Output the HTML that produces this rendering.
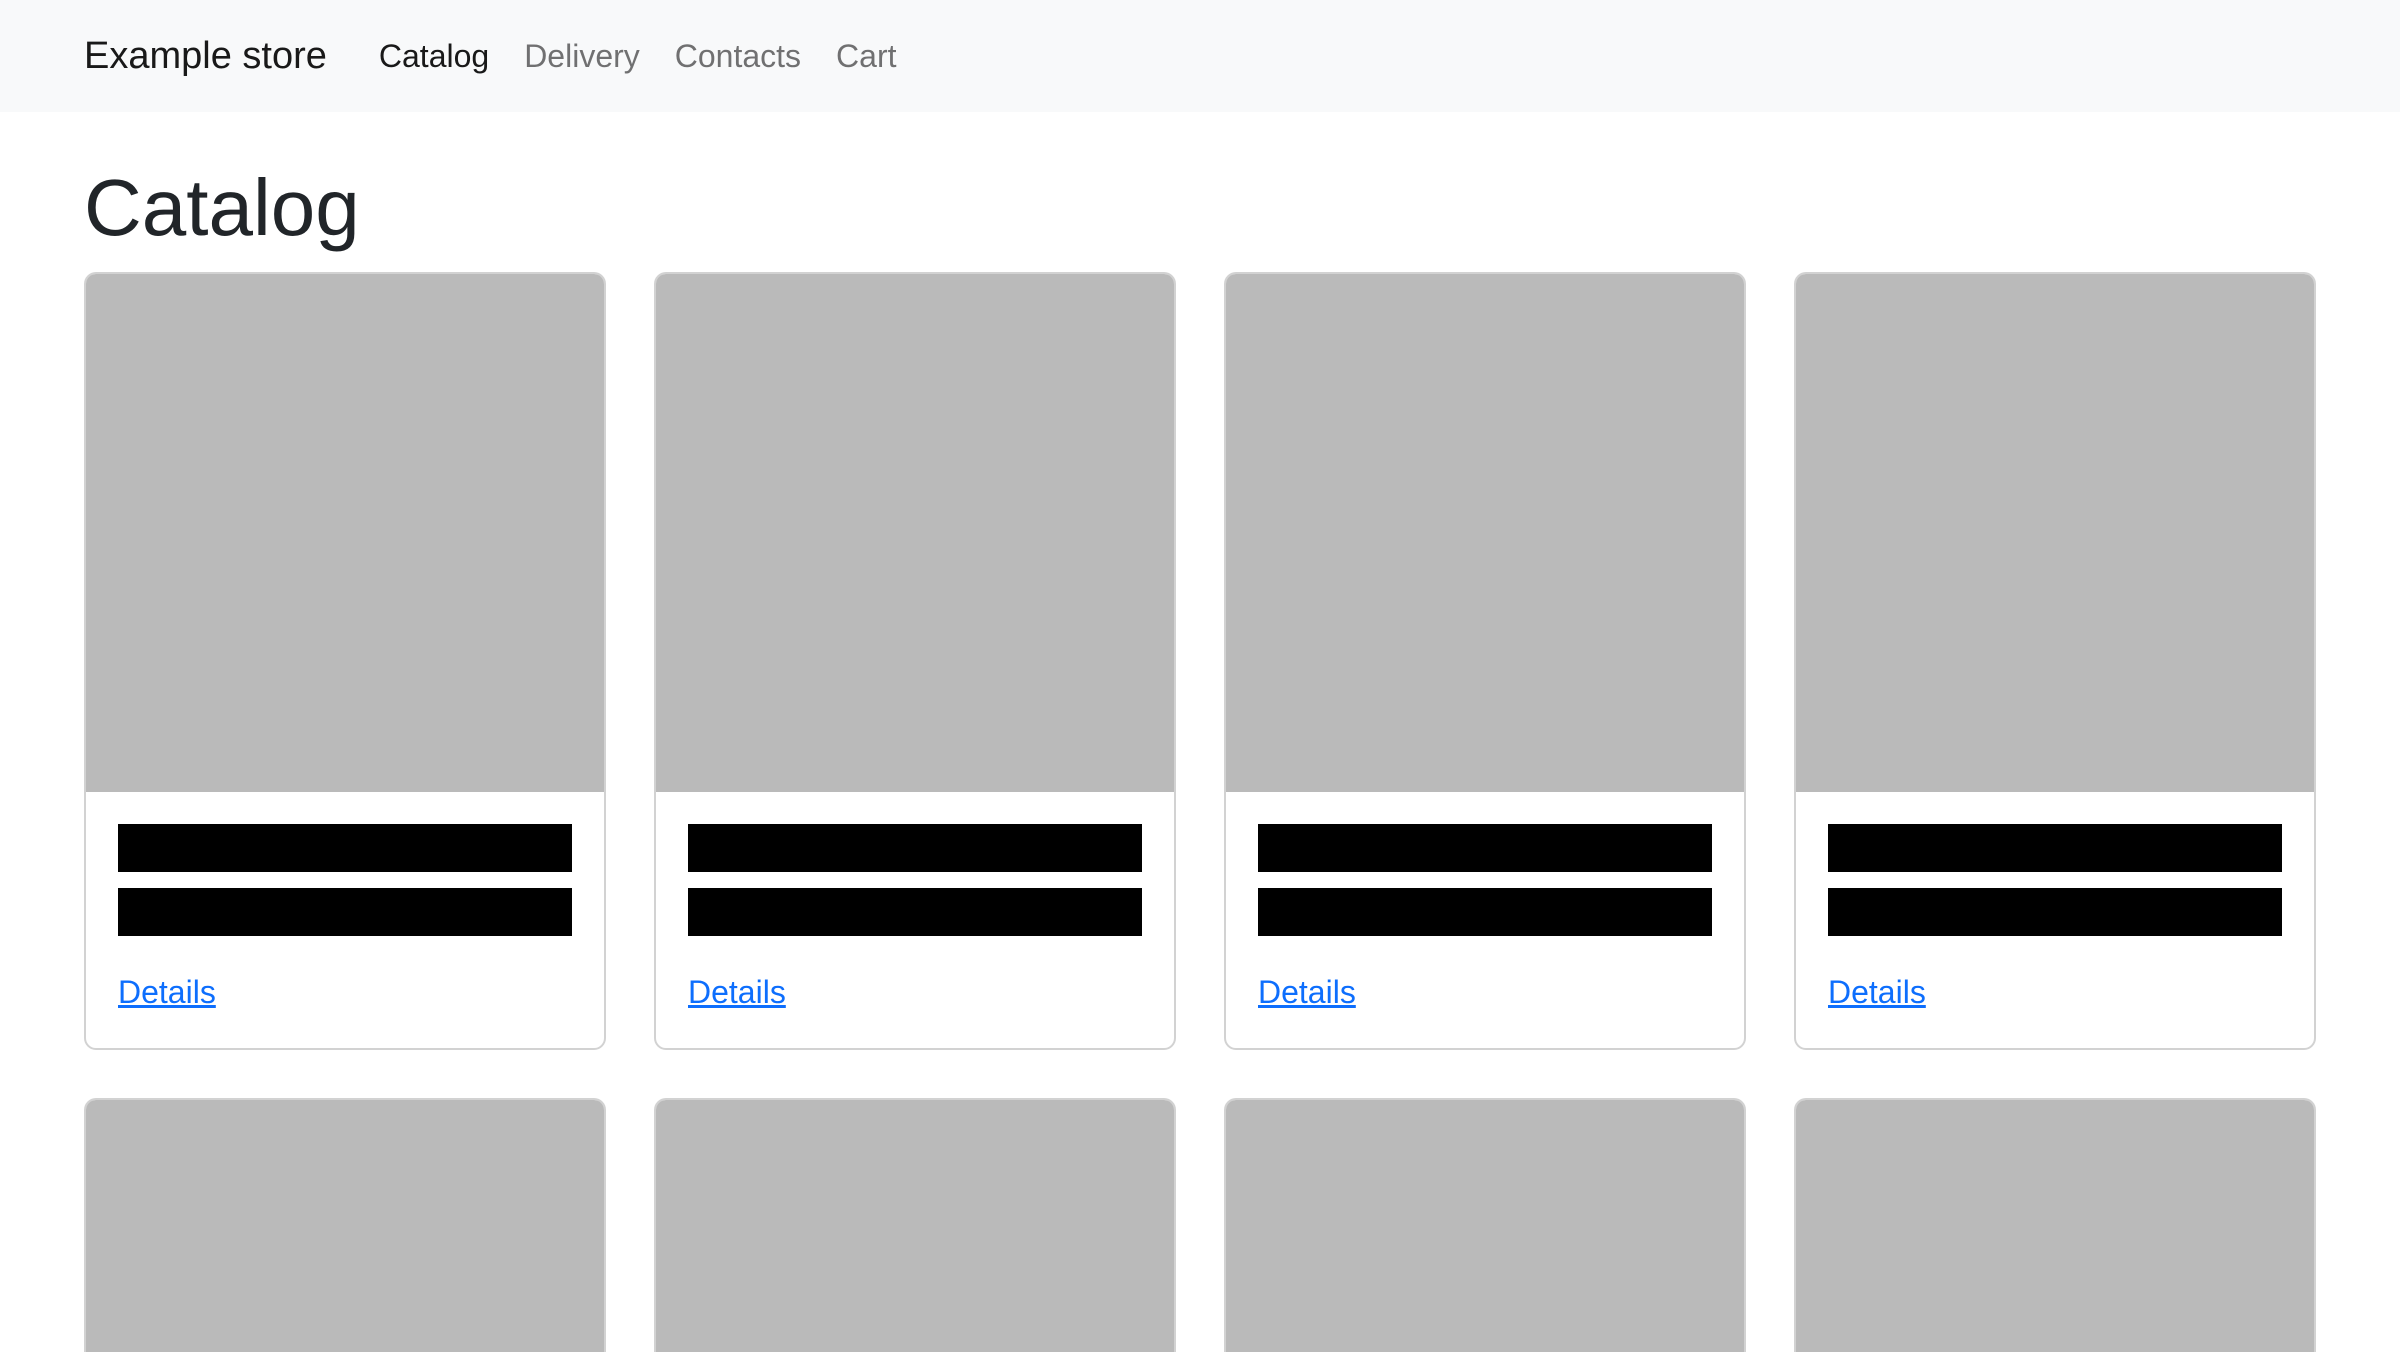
<!DOCTYPE html>
<html style="height:1352px;overflow:hidden;"><head><meta charset="utf-8"><style>
html,body{margin:0;padding:0;}
html{height:1352px;overflow:hidden;}
body{width:1200px;height:676px;overflow:hidden;zoom:2;font-family:"Liberation Sans",sans-serif;color:#212529;background:#fff;}
.nav{height:56px;background:#f8f9fa;display:flex;align-items:center;padding-left:42px;}
.brand{font-size:19px;color:rgba(0,0,0,.9);margin-right:26px;}
.nav a{font-size:16px;color:rgba(0,0,0,.55);text-decoration:none;margin-right:17.5px;}
.nav a.active{color:rgba(0,0,0,.9);}
h1{font-size:40px;font-weight:500;margin:24px 0 8px 42px;line-height:48px;height:48px;}
.grid{display:grid;grid-template-columns:repeat(4,261px);column-gap:24px;row-gap:24px;margin-left:42px;}
.card{border:1px solid rgba(0,0,0,.175);border-radius:6px;overflow:hidden;height:389px;box-sizing:border-box;}
.img{height:259px;background:#bababa;}
.body{padding:16px;}
.bar{height:24px;background:#000;margin-bottom:8px;}
.body a{display:block;margin-top:16px;color:#0d6efd;text-decoration:underline;font-size:16px;line-height:24px;}
</style></head><body>
<div class="nav"><span class="brand">Example store</span><a class="active">Catalog</a><a>Delivery</a><a>Contacts</a><a>Cart</a></div>
<h1>Catalog</h1>
<div class="grid">
<div class="card"><div class="img"></div><div class="body"><div class="bar"></div><div class="bar"></div><a>Details</a></div></div>
<div class="card"><div class="img"></div><div class="body"><div class="bar"></div><div class="bar"></div><a>Details</a></div></div>
<div class="card"><div class="img"></div><div class="body"><div class="bar"></div><div class="bar"></div><a>Details</a></div></div>
<div class="card"><div class="img"></div><div class="body"><div class="bar"></div><div class="bar"></div><a>Details</a></div></div>
<div class="card"><div class="img"></div></div>
<div class="card"><div class="img"></div></div>
<div class="card"><div class="img"></div></div>
<div class="card"><div class="img"></div></div>
</div>
</body></html>
